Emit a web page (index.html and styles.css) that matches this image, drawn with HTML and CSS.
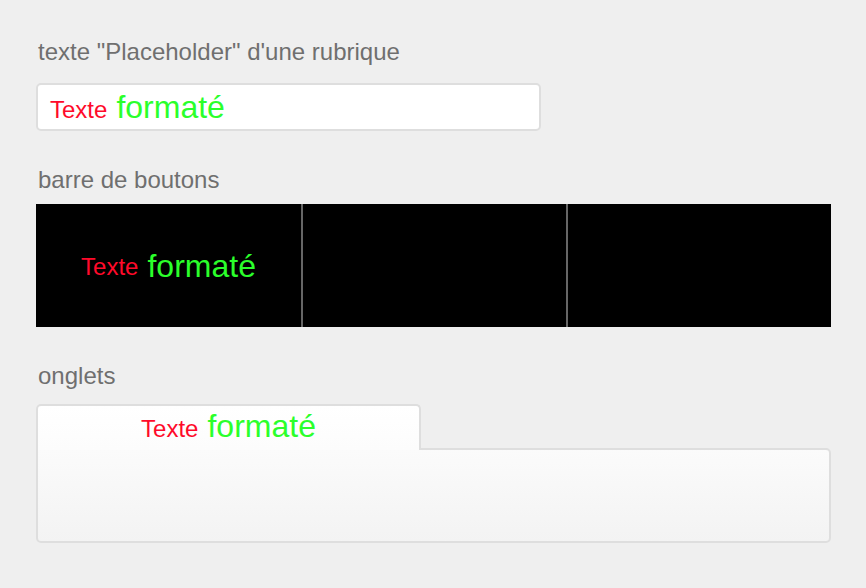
FILE: index.html
```html
<!DOCTYPE html>
<html lang="fr">
<head>
    <meta charset="UTF-8">
    <title>Champs formatés</title>
    <link rel="stylesheet" href="styles.css">
</head>
<body>
    <div class="page">
        <div class="field-label label-first">texte "Placeholder" d'une rubrique</div>
        <div class="text-field">
            <span class="fmt-red">Texte</span> <span class="fmt-green">formaté</span>
        </div>

        <div class="field-label label-bar">barre de boutons</div>
        <div class="button-bar">
            <div class="bar-btn"><span class="fmt-red">Texte</span> <span class="fmt-green">formaté</span></div>
            <div class="bar-btn"></div>
            <div class="bar-btn"></div>
        </div>

        <div class="field-label label-tabs">onglets</div>
        <div class="tabs">
            <div class="tab-strip">
                <div class="tab active"><span class="fmt-red">Texte</span> <span class="fmt-green">formaté</span></div>
            </div>
            <div class="tab-panel"></div>
        </div>
    </div>
</body>
</html>
```

FILE: styles.css
```css
:root {
    --bg: #efefef;
    --label: #6f6f6f;
    --border: #dedede;
    --red: #ff0a2a;
    --green: #2bff2b;
}

body {
    margin: 0;
    background: var(--bg);
    font-family: 'Liberation Sans', Arial, sans-serif;
}

.page {
    width: 795px;
    padding: 38px 0 0 36px;
}

.field-label {
    font-size: 24px;
    line-height: 28px;
    color: var(--label);
    padding-left: 2px;
}
.label-first { margin-bottom: 17px; }
.label-bar { margin-top: 35px; margin-bottom: 10px; }
.label-tabs { margin-top: 35px; margin-bottom: 14px; }

.fmt-red {
    color: var(--red);
    font-size: 24px;
}
.fmt-green {
    color: var(--green);
    font-size: 32px;
}

.text-field {
    width: 505px;
    height: 48px;
    box-sizing: border-box;
    background: #fff;
    border: 2px solid var(--border);
    border-radius: 5px;
    padding: 4px 12px 0 12px;
    display: flex;
    align-items: baseline;
    gap: 9px;
}

.button-bar {
    display: grid;
    grid-template-columns: 265px 1fr 1fr;
    height: 123px;
    background: #000;
}

.bar-btn {
    display: flex;
    align-items: center;
    justify-content: center;
    gap: 9px;
    padding-top: 2px;
}
.bar-btn + .bar-btn {
    border-left: 2px solid #666;
}

.tab-strip {
    display: flex;
}

.tab {
    position: relative;
    z-index: 1;
    width: 385px;
    height: 46px;
    box-sizing: border-box;
    margin-bottom: -2px;
    border: 2px solid var(--border);
    border-bottom: none;
    border-radius: 5px 5px 0 0;
    background: linear-gradient(#fff, #fcfcfc);
    display: flex;
    justify-content: center;
    align-items: baseline;
    gap: 9px;
    padding-top: 2px;
}

.tab-panel {
    height: 95px;
    box-sizing: border-box;
    border: 2px solid var(--border);
    border-radius: 0 5px 5px 5px;
    background: linear-gradient(#fbfbfb, #f3f3f3);
}
```
